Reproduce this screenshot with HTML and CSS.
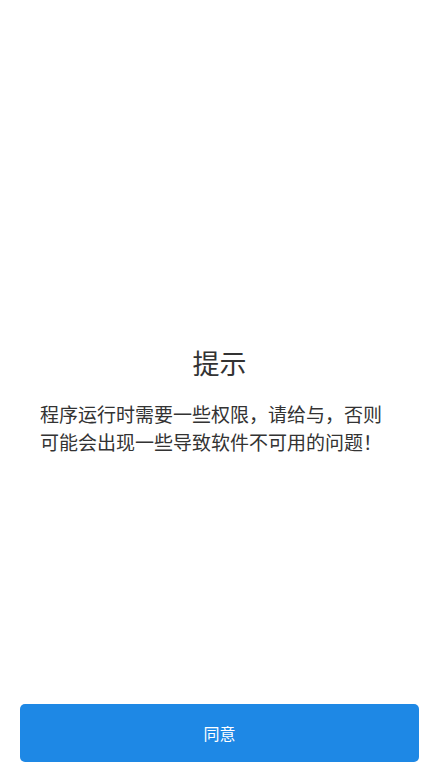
FILE: index.html
```html
<!DOCTYPE html>
<html lang="zh-CN">
<head>
<meta charset="utf-8">
<meta name="viewport" content="width=device-width, initial-scale=1">
<title>提示</title>
<link rel="stylesheet" href="styles.css">
</head>
<body>
<div class="page">
  <main class="content">
    <h1 class="title">提示</h1>
    <p class="message">程序运行时需要一些权限，请给与，否则可能会出现一些导致软件不可用的问题！</p>
  </main>
  <footer class="footer">
    <button class="agree" type="button">同意</button>
  </footer>
</div>
</body>
</html>
```
FILE: styles.css
```css
html, body {
  margin: 0;
  padding: 0;
  background: #ffffff;
}
body {
  font-family: "Noto Sans CJK SC", "Noto Sans", sans-serif;
  color: #333333;
}
.page {
  height: 100vh;
  display: flex;
  flex-direction: column;
}
.content {
  flex: 1;
  display: flex;
  flex-direction: column;
  justify-content: center;
  padding: 97px 40px 0;
}
.title {
  margin: 0 0 19px;
  font-size: 27px;
  line-height: 36px;
  font-weight: 400;
  text-align: center;
  color: #333333;
}
.message {
  margin: 0;
  font-size: 19px;
  line-height: 28px;
  color: #333333;
}
.footer {
  padding: 0 20px 20px;
}
.agree {
  display: block;
  width: 100%;
  height: 58px;
  border: none;
  border-radius: 5px;
  background: #1e88e5;
  color: #ffffff;
  font-family: "Noto Sans CJK SC", "Noto Sans", sans-serif;
  font-size: 16px;
  padding: 0;
}
```
